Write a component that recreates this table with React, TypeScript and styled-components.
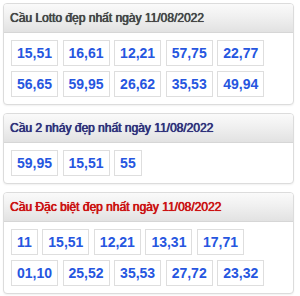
import React from "react";
import styled, { createGlobalStyle } from "styled-components";

const Global = createGlobalStyle`
  html, body { margin: 0; padding: 0; background: #fff; }
  body { font-family: "Liberation Sans", Arial, sans-serif; }
`;

const Page = styled.div`
  display: flex;
  flex-direction: column;
  gap: 8px;
  padding: 3px 6px 3px 3px;
`;

const Panel = styled.section`
  border: 1px solid #dcdcdc;
  border-radius: 4px;
  background: #fff;
  box-shadow: 0 1px 2px rgba(0, 0, 0, 0.06);
  overflow: hidden;
`;

const Header = styled.div<{ $tone: string }>`
  height: 28px;
  display: flex;
  align-items: center;
  padding: 0 6px;
  background: linear-gradient(to bottom, #fafafa 0%, #f0f0f0 45%, #e2e2e2 100%);
  border-bottom: 1px solid #d6d6d6;
  font-size: 12px;
  color: ${(p) => p.$tone};
  text-shadow: 0 0 0.7px ${(p) => p.$tone}, 0.3px 0 0 ${(p) => p.$tone};
  white-space: nowrap;
`;

const Body = styled.div`
  display: flex;
  flex-wrap: wrap;
  gap: 5px 4.5px;
  padding: 7px 7px 7px;
`;

const Num = styled.span`
  box-sizing: border-box;
  height: 26px;
  display: inline-flex;
  align-items: center;
  justify-content: center;
  padding: 0 5px;
  border: 1px solid #dedede;
  background: #fff;
  color: #2656e0;
  font-size: 14px;
  font-weight: bold;
`;

const data = [
  {
    title: "Cầu Lotto đẹp nhất ngày 11/08/2022",
    tone: "#454545",
    nums: ["15,51", "16,61", "12,21", "57,75", "22,77", "56,65", "59,95", "26,62", "35,53", "49,94"],
  },
  {
    title: "Cầu 2 nháy đẹp nhất ngày 11/08/2022",
    tone: "#30307a",
    nums: ["59,95", "15,51", "55"],
  },
  {
    title: "Cầu Đặc biệt đẹp nhất ngày 11/08/2022",
    tone: "#cc1111",
    nums: ["11", "15,51", "12,21", "13,31", "17,71", "01,10", "25,52", "35,53", "27,72", "23,32"],
  },
];

export default function App() {
  return (
    <>
      <Global />
      <Page>
        {data.map((d) => (
          <Panel key={d.title}>
            <Header $tone={d.tone}>{d.title}</Header>
            <Body>
              {d.nums.map((n, i) => (
                <Num key={i}>{n}</Num>
              ))}
            </Body>
          </Panel>
        ))}
      </Page>
    </>
  );
}
